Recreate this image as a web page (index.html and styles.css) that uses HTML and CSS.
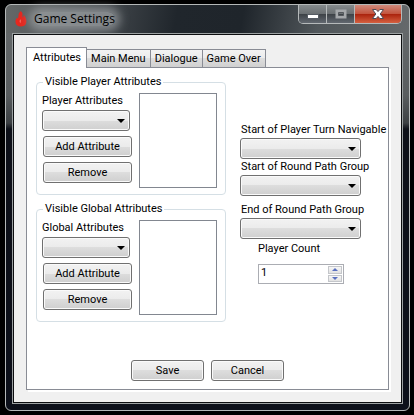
FILE: index.html
```html
<!DOCTYPE html>
<html lang="en">
<head>
<meta charset="utf-8">
<meta name="viewport" content="width=device-width, initial-scale=1">
<title>Game Settings</title>
<link rel="stylesheet" href="styles.css">
</head>
<body>
<main class="window">
  <header class="titlebar">
    <svg class="flame" viewBox="0 0 12 16" aria-hidden="true">
      <path fill="#e5281f" d="M5.600 0C8 1.600 7.600 3.600 7.400 5C7.500 6.300 8 6.800 8.400 6L8.800 3.800C10.600 6 11.600 8.600 11.400 11C11.200 14 9 15.600 5.800 15.600C2.600 15.600.6 13.800.5 11C.4 9.200 1 8 1.800 6.800L2.600 7.600C4 6 3 4.600 3.800 2.400C4.300 1.400 5.200 1.200 5.600 0Z"/>
      <path fill="#f7675e" d="M5.200 8.200C6.800 9.600 5.400 10.800 5.600 12.200C4.400 11.400 4.200 9.800 5.200 8.200Z"/>
    </svg>
    <h1 class="title">Game Settings</h1>
    <div class="caption">
      <button class="cap cap-min" type="button" aria-label="Minimize">
        <svg viewBox="0 0 12 10"><rect x=".5" y="5.500" width="11" height="4" fill="#fff" stroke="#555b63"/></svg>
      </button>
      <button class="cap cap-max" type="button" aria-label="Maximize" disabled>
        <svg viewBox="0 0 12 10"><path d="M2 2h8v6H2z" fill="none" stroke="#a5a8ab" stroke-width="3"/><path d="M3.500 3.500h5v3h-5z" fill="none" stroke="#54585d"/></svg>
      </button>
      <button class="cap cap-close" type="button" aria-label="Close">
        <svg viewBox="0 0 12 10"><path d="M.5.5h3.700L6 2.600 7.800.5h3.700L8.200 5l3.300 4.500H7.800L6 7.400 4.200 9.500H.5L3.800 5z" fill="#fff" stroke="#4c4a55"/></svg>
      </button>
    </div>
  </header>
  <div class="client">
    <div class="tabs" role="tablist">
      <button class="tab tab-active" type="button" role="tab" aria-selected="true">Attributes</button>
      <button class="tab" type="button" role="tab" aria-selected="false">Main Menu</button>
      <button class="tab" type="button" role="tab" aria-selected="false">Dialogue</button>
      <button class="tab" type="button" role="tab" aria-selected="false">Game Over</button>
    </div>
    <form class="panel">
      <div class="columns">
        <div class="groups">
          <fieldset class="group">
            <legend>Visible Player Attributes</legend>
            <div class="group-body">
              <div class="picker">
                <label for="player-attr">Player Attributes</label>
                <span class="combo"><select id="player-attr"></select></span>
                <button class="btn" type="button">Add Attribute</button>
                <button class="btn" type="button">Remove</button>
              </div>
              <select class="list" size="6" aria-label="Visible Player Attributes"></select>
            </div>
          </fieldset>
          <fieldset class="group">
            <legend>Visible Global Attributes</legend>
            <div class="group-body">
              <div class="picker">
                <label for="global-attr">Global Attributes</label>
                <span class="combo"><select id="global-attr"></select></span>
                <button class="btn" type="button">Add Attribute</button>
                <button class="btn" type="button">Remove</button>
              </div>
              <select class="list" size="6" aria-label="Visible Global Attributes"></select>
            </div>
          </fieldset>
        </div>
        <div class="options">
          <div class="option">
            <label for="turn-nav">Start of Player Turn Navigable</label>
            <span class="combo"><select id="turn-nav"></select></span>
          </div>
          <div class="option">
            <label for="round-start">Start of Round Path Group</label>
            <span class="combo"><select id="round-start"></select></span>
          </div>
          <div class="option option-spaced">
            <label for="round-end">End of Round Path Group</label>
            <span class="combo"><select id="round-end"></select></span>
          </div>
          <div class="option count">
            <label for="player-count">Player Count</label>
            <div class="spinner">
              <input id="player-count" type="number" value="1">
              <div class="steps">
                <button class="step step-up" type="button" aria-label="Increase"></button>
                <button class="step step-down" type="button" aria-label="Decrease"></button>
              </div>
            </div>
          </div>
        </div>
      </div>
      <div class="actions">
        <button class="btn" type="submit">Save</button>
        <button class="btn" type="button">Cancel</button>
      </div>
    </form>
  </div>
</main>
</body>
</html>
```
FILE: styles.css
```css
* { box-sizing: border-box; }

body {
  margin: 0;
  min-height: 100vh;
  padding: 4px 4px 5px 5px;
  display: flex;
  background: #000;
  color: #000;
  font: 11px/16px Roboto, "Liberation Sans", sans-serif;
}

button, input, select {
  margin: 0;
  padding: 0;
  font: inherit;
  color: inherit;
}

.window {
  flex: 1;
  min-width: 0;
  display: flex;
  flex-direction: column;
  padding: 0 7px 7px;
  border: 1px solid #b4b8b8;
  border-radius: 6px;
  background:
    linear-gradient(100deg, #646868 0, #4b5054 80px, #20262c 170px, #1f252b 235px, #50565a 310px, #65696b 100%) 0 0 / 100% 28px no-repeat,
    linear-gradient(#686c6e 0, #595d5f 90px, #3c4043 118px, #0d1018 124px, #0c101a 100%);
}

.titlebar {
  height: 29px;
  display: flex;
  align-items: flex-start;
  padding-left: 2px;
}

.flame {
  width: 12px;
  height: 16px;
  margin-top: 6px;
}

.title {
  margin: 7px 0 0 7px;
  font: 12px/14px "Open Sans", "Noto Sans", sans-serif;
  border-radius: 7px;
  background: rgba(160, 164, 166, .7);
  box-shadow: 0 0 10px 5px rgba(160, 164, 166, .7);
}

.caption {
  display: flex;
  margin-left: auto;
  border: 1px solid #b5b9ba;
  border-top: 0;
  border-radius: 0 0 5px 5px;
  overflow: hidden;
}

.cap {
  width: 28px;
  height: 18px;
  border: 0;
  border-right: 1px solid #b5b9ba;
  display: flex;
  align-items: center;
  justify-content: center;
  background: linear-gradient(#858a8c, #6b7073 48%, #3e4348 52%, #626870);
}

.cap svg { width: 12px; height: 10px; }

.cap-close {
  width: 46px;
  border: 0;
  background: linear-gradient(#cf8a7c, #c3553f 48%, #ab240e 52%, #d56040);
}

.client {
  flex: 1;
  display: flex;
  flex-direction: column;
  padding: 12px;
  border: 1px solid #0c0e10;
  outline: 1px solid #9ca1a2;
  background: #f0f0f0;
}

.tabs {
  display: flex;
  align-items: flex-end;
  height: 20px;
}

.tab {
  height: 18px;
  padding: 0 4px;
  border: 1px solid #898c95;
  border-left: 0;
  border-bottom: 0;
  background: linear-gradient(#f3f3f3, #ebebeb 50%, #dddddd 50%, #d0d0d0);
}

.tab-active {
  height: 21px;
  padding: 0 5px 1px 6px;
  margin-bottom: -1px;
  border-left: 1px solid #898c95;
  background: #fff;
  position: relative;
}

.panel {
  flex: 1;
  padding: 6px 0 8px 9px;
  border: 1px solid #898c95;
  background: #fff;
  box-shadow: 2px 2px 0 #fff;
}

.columns { display: flex; gap: 14px; }

.groups {
  flex: 0 0 190px;
  display: flex;
  flex-direction: column;
  gap: 6px;
}

.group {
  min-width: 0;
  margin: 0;
  padding: 3px 8px 6px 5px;
  border: 1px solid #d5dfe5;
  border-radius: 4px;
}

.group legend { margin-left: 1px; padding: 0 2px; }

.group-body {
  display: grid;
  grid-template-columns: 90px 1fr;
  gap: 7px;
}

.picker {
  display: flex;
  flex-direction: column;
}

.picker .btn { margin: 5px 0 0 1px; }

label { display: block; white-space: nowrap; }

.picker label { margin-bottom: 1px; }

.combo {
  display: block;
  width: 88px;
  height: 21px;
  position: relative;
}

.combo select {
  display: block;
  width: 100%;
  height: 100%;
  appearance: none;
}

.combo::after {
  content: "";
  position: absolute;
  right: 5px;
  top: 9px;
  border: 4px solid transparent;
  border-top-color: #000;
  border-bottom: 0;
  pointer-events: none;
}

.btn, .combo select {
  border: 1px solid #707070;
  border-radius: 3px;
  background: linear-gradient(#f2f2f2, #ebebeb 50%, #dddddd 50%, #cfcfcf);
  box-shadow: inset 0 0 0 1px #fafafa;
}

.btn { height: 21px; }

.list {
  width: 100%;
  height: 95px;
  border: 1px solid #828790;
  border-radius: 0;
  background: #fff;
}

.options { padding-top: 48px; min-width: 0; }

.options .combo { width: 121px; }

.options label { margin-left: 1px; }

.option-spaced { margin-top: 6px; }

.count { padding: 2px 0 0 17px; }

.spinner {
  display: flex;
  width: 86px;
  height: 20px;
  margin: 7px 0 0 1px;
  border: 1px solid #abadb3;
  background: #fff;
}

.spinner input {
  flex: 1;
  min-width: 0;
  padding: 0 2px 2px;
  border: 0;
  background: none;
  appearance: textfield;
}

.spinner input::-webkit-inner-spin-button { appearance: none; margin: 0; }

.steps {
  display: flex;
  flex-direction: column;
  gap: 1px;
  padding: 1px;
}

.step {
  flex: 1;
  width: 14px;
  display: flex;
  align-items: center;
  justify-content: center;
  border: 1px solid #c4c6ca;
  background: linear-gradient(#f6f6f6, #e2e2e2);
}

.step::before {
  content: "";
  border: 3px solid transparent;
}

.step-up::before { border-bottom-color: #5a70c0; border-top: 0; }

.step-down::before { border-top-color: #5a70c0; border-bottom: 0; }

.actions {
  display: flex;
  justify-content: center;
  gap: 7px;
  margin: 38px 9px 0 0;
}

.actions .btn { width: 73px; }
```
